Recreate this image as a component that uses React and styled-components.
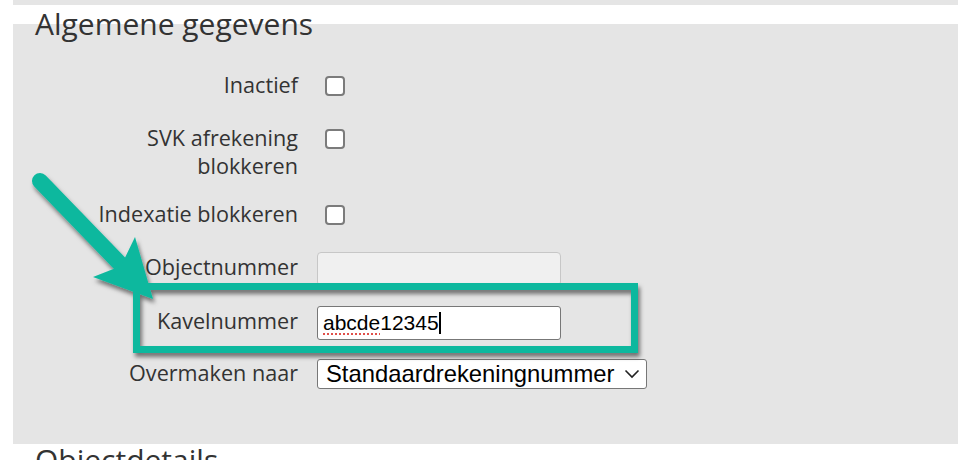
import React from "react";
import styled, { createGlobalStyle } from "styled-components";

const Global = createGlobalStyle`
  html, body { margin: 0; padding: 0; background: #ffffff; }
  body { font-family: "Open Sans", "DejaVu Sans", sans-serif; color: #333333; }
`;

const Page = styled.div`
  position: relative;
  width: 978px;
  height: 460px;
  overflow: hidden;
  background: #ffffff;
`;

const TopStrip = styled.div`
  margin: 0 20px 0 13px;
  height: 5px;
  background: #e5e5e5;
`;

const Section = styled.section`
  margin: ${(p) => p.$offset || 0}px 20px 0 13px;
`;

const Heading = styled.h2`
  margin: 0 0 -19px 22px;
  height: 38px;
  font-family: "Open Sans", sans-serif;
  font-weight: 400;
  font-size: 30px;
  line-height: 38px;
  color: #333333;
  white-space: nowrap;
`;

const Panel = styled.div`
  background: #e5e5e5;
  height: ${(p) => p.$height}px;
  padding: 48px 0 0 75px;
  box-sizing: border-box;
  display: flex;
  flex-direction: column;
`;

const Row = styled.div`
  display: grid;
  grid-template-columns: 210px auto;
  column-gap: 19px;
  align-items: ${(p) => (p.$top ? "start" : "center")};
  margin-top: ${(p) => p.$gap || 0}px;
  min-height: ${(p) => p.$h || 28}px;
`;

const Label = styled.label`
  text-align: right;
  font-family: "Open Sans", sans-serif;
  font-size: 21.6px;
  line-height: 28px;
  color: #333333;
  margin: ${(p) => (p.$lift ? `-${p.$lift * 2}px 0 0` : "-2px 0 0")};
`;

const Checkbox = styled.span`
  display: block;
  width: 20px;
  height: 20px;
  box-sizing: border-box;
  margin: ${(p) => p.$mt || 0}px 0 0 8px;
  border: 2px solid #7b7b7b;
  border-radius: 4px;
  background: #ffffff;
`;

const TextInput = styled.input`
  width: 244px;
  height: 34px;
  box-sizing: border-box;
  border: 1px solid #c7c7c7;
  border-radius: 4px;
  background: #f0f0f0;
  margin: 0;
  padding: 0 5px;
  font-family: "Liberation Sans", Arial, sans-serif;
  font-size: 21px;
`;

const FocusedField = styled.div`
  width: 244px;
  height: 34px;
  box-sizing: border-box;
  border: 1px solid #777777;
  border-radius: 3px;
  background: #ffffff;
  padding: 0 5px;
  display: flex;
  align-items: center;
  font-family: "Liberation Sans", Arial, sans-serif;
  font-size: 21px;
  color: #000000;
`;

const Misspelled = styled.span`
  text-decoration: underline dotted #e0504a;
  text-decoration-thickness: 2px;
  text-underline-offset: 3px;
`;

const Caret = styled.span`
  display: inline-block;
  width: 2px;
  height: 22px;
  background: #000000;
`;

const SelectBox = styled.div`
  width: 330px;
  height: 30px;
  box-sizing: border-box;
  border: 1px solid #777777;
  border-radius: 3px;
  background: #ffffff;
  padding: 0 6px 0 8px;
  display: flex;
  align-items: center;
  justify-content: space-between;
  font-family: "Liberation Sans", Arial, sans-serif;
  font-size: 23.8px;
  color: #000000;
  white-space: nowrap;
`;

const Overlay = styled.svg`
  position: absolute;
  left: 0;
  top: 0;
  pointer-events: none;
`;

const TEAL = "#0cb89e";

export default function App() {
  return (
    <Page>
      <Global />
      <TopStrip />
      <Section>
        <Heading>Algemene gegevens</Heading>
        <Panel $height={420}>
          <Row>
            <Label>Inactief</Label>
            <Checkbox />
          </Row>
          <Row $top $gap={25} $h={56}>
            <Label $lift={0.5}>SVK afrekening blokkeren</Label>
            <Checkbox $mt={4} />
          </Row>
          <Row $gap={20}>
            <Label>Indexatie blokkeren</Label>
            <Checkbox />
          </Row>
          <Row $gap={23} $h={34}>
            <Label $lift={2.5}>Objectnummer</Label>
            <TextInput disabled defaultValue="" />
          </Row>
          <Row $gap={20} $h={34}>
            <Label $lift={2.5}>Kavelnummer</Label>
            <FocusedField>
              <Misspelled>abcde</Misspelled>12345<Caret />
            </FocusedField>
          </Row>
          <Row $gap={19} $h={30}>
            <Label>Overmaken naar</Label>
            <SelectBox>
              <span>Standaardrekeningnummer</span>
              <svg width="16" height="10" viewBox="0 0 16 10">
                <polyline points="1.5,1.5 8,8 14.5,1.5" fill="none" stroke="#222" strokeWidth="1.6" />
              </svg>
            </SelectBox>
          </Row>
        </Panel>
      </Section>
      <Section $offset={-3}>
        <Heading>Objectdetails</Heading>
      </Section>
      <Overlay width="978" height="460" viewBox="0 0 978 460">
        <defs>
          <filter id="shadow" x="-20%" y="-20%" width="140%" height="140%">
            <feDropShadow dx="2" dy="4" stdDeviation="2" floodColor="#000" floodOpacity="0.5" />
          </filter>
        </defs>
        <g filter="url(#shadow)">
          <rect x="136.5" y="286.5" width="498" height="63" fill="none" stroke={TEAL} strokeWidth="7" />
          <line x1="40" y1="181" x2="128" y2="272" stroke={TEAL} strokeWidth="16" strokeLinecap="round" />
          <polygon points="135,237 153,299 93,277 121,266" fill={TEAL} />
        </g>
      </Overlay>
    </Page>
  );
}
